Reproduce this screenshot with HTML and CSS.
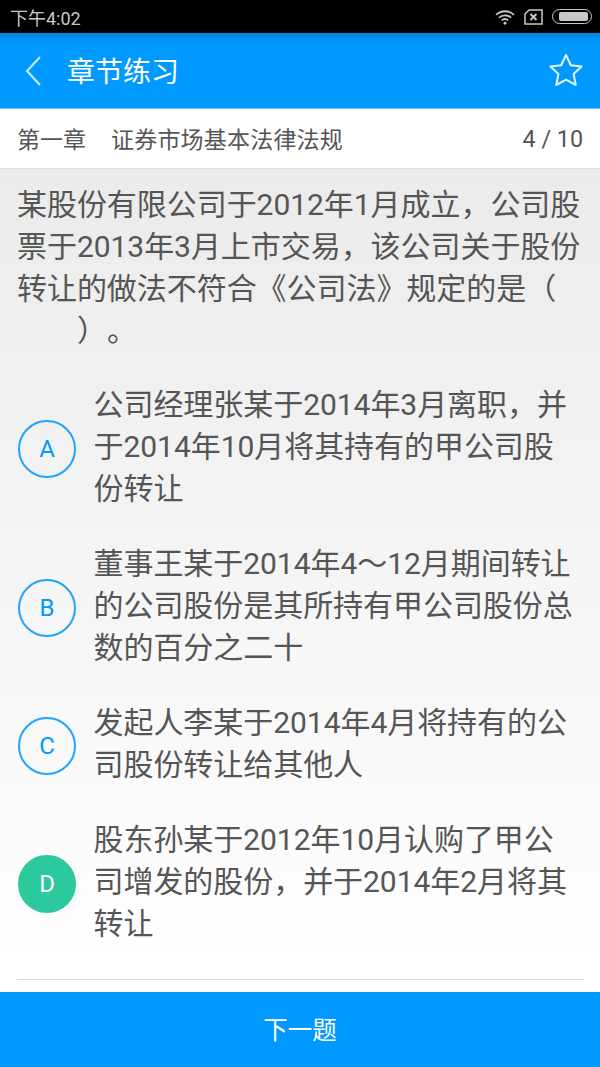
FILE: index.html
```html
<!DOCTYPE html>
<html lang="zh-CN">

<head>
    <meta charset="UTF-8">
    <meta name="viewport" content="width=device-width, initial-scale=1.0">
    <title>章节练习</title>
    <link rel="stylesheet" href="styles.css">
</head>

<body>
    <div class="status-bar">
        <span class="status-time">下午4:02</span>
        <div class="status-icons">
            <svg class="icon-wifi" width="20" height="16" viewBox="0 0 22 18" fill="none" stroke="#c8c8c8" stroke-width="2">
                <path d="M1 6.5C6.5 1.2 15.5 1.2 21 6.5" />
                <path d="M4.2 9.7C8 6.2 14 6.2 17.8 9.7" />
                <path d="M7.4 12.7C9.5 11 12.5 11 14.6 12.7" />
                <circle cx="11" cy="16" r="1.6" fill="#c8c8c8" stroke="none" />
            </svg>
            <svg class="icon-sim" width="19" height="16" viewBox="0 0 19 16" fill="none" stroke="#c8c8c8">
                <path d="M5 1H18V15H1V5Z" stroke-width="1.5" />
                <path d="M6.5 5L12.5 11M12.5 5L6.5 11" stroke-width="2" />
            </svg>
            <div class="battery">
                <div class="battery-level"></div>
            </div>
        </div>
    </div>

    <header class="toolbar">
        <svg class="icon-back" width="16" height="30" viewBox="0 0 16 30" fill="none" stroke="#cdeaff" stroke-width="2">
            <path d="M15 1L2 15L15 29" />
        </svg>
        <h1 class="toolbar-title">章节练习</h1>
        <svg class="icon-star" width="34" height="34" viewBox="0 0 34 34" fill="none" stroke="#e3f4ff" stroke-width="2" stroke-linejoin="round">
            <path d="M17 2L21.8 12.2L32.6 13.6L24.6 21.1L26.8 32L17 26.6L7.2 32L9.4 21.1L1.4 13.6L12.2 12.2Z" />
        </svg>
    </header>

    <div class="chapter-bar">
        <span class="chapter-name">第一章</span>
        <span class="chapter-title">证券市场基本法律法规</span>
        <span class="chapter-count">4 / 10</span>
    </div>

    <main class="question">
        <p class="question-text">某股份有限公司于2012年1月成立，公司股票于2013年3月上市交易，该公司关于股份转让的做法不符合《公司法》规定的是（<br><span class="blank"></span>）。</p>

        <div class="option">
            <div class="option-mark">A</div>
            <div class="option-text">公司经理张某于2014年3月离职，并于2014年10月将其持有的甲公司股份转让</div>
        </div>
        <div class="option">
            <div class="option-mark">B</div>
            <div class="option-text">董事王某于2014年4～12月期间转让的公司股份是其所持有甲公司股份总数的百分之二十</div>
        </div>
        <div class="option">
            <div class="option-mark">C</div>
            <div class="option-text">发起人李某于2014年4月将持有的公司股份转让给其他人</div>
        </div>
        <div class="option">
            <div class="option-mark selected">D</div>
            <div class="option-text">股东孙某于2012年10月认购了甲公司增发的股份，并于2014年2月将其转让</div>
        </div>

        <div class="divider"></div>
    </main>

    <div class="next-button">下一题</div>
</body>

</html>
```

FILE: styles.css
```css
* {
    box-sizing: border-box;
}

body {
    margin: 0;
    width: 600px;
    height: 1067px;
    display: flex;
    flex-direction: column;
    overflow: hidden;
    font-family: Roboto, "Noto Sans CJK SC", sans-serif;
    color: #555555;
    text-spacing-trim: space-all;
}

.status-bar {
    height: 33px;
    padding: 0 8px 0 10px;
    background-color: #000000;
    color: #c8c8c8;
    display: flex;
    align-items: center;
    justify-content: space-between;
    font-size: 18px;
}

.status-icons {
    display: flex;
    align-items: center;
    gap: 9px;
}

.battery {
    width: 40px;
    height: 15px;
    padding: 2px;
    border: 1px solid #c8c8c8;
    border-radius: 8px;
}

.battery-level {
    width: 29px;
    height: 9px;
    margin-left: 4px;
    background-color: #c8c8c8;
    border-radius: 2px;
}

.toolbar {
    height: 76px;
    padding: 0 17px 2px 25px;
    background: linear-gradient(#0088e4, #0099ff 10px);
    border-bottom: 1px solid #6cc4ff;
    display: flex;
    align-items: center;
}

.icon-back {
    margin-top: 2px;
}

.toolbar-title {
    flex: 1;
    margin: 0 0 0 26px;
    font-size: 28px;
    font-weight: normal;
    color: #ffffff;
}

.chapter-bar {
    height: 60px;
    padding: 0 17px 2px;
    background-color: #ffffff;
    border-bottom: 1px solid #dddddd;
    display: flex;
    align-items: center;
    font-size: 23px;
}

.chapter-name {
    margin-right: 25px;
}

.chapter-title {
    flex: 1;
    letter-spacing: 0.2px;
}

.chapter-count {
    font-size: 23.3px;
    padding-top: 2px;
}

.question {
    flex: 1;
    padding: 15px 16px 0 17px;
    background: linear-gradient(#ebebeb, #ffffff 810px);
}

.question-text {
    margin: 0 0 15.5px;
    font-size: 30px;
    line-height: 42px;
    letter-spacing: -0.05px;
}

.blank {
    display: inline-block;
    width: 60px;
}

.option {
    padding: 16.5px 0;
    display: flex;
    align-items: center;
    font-size: 30px;
    line-height: 42px;
    letter-spacing: -0.05px;
}

.option-mark {
    flex: none;
    width: 58px;
    height: 58px;
    margin: 4px 17.5px 0 1px;
    border: 2px solid #1fa5ff;
    border-radius: 50%;
    color: #0099ff;
    display: flex;
    align-items: center;
    justify-content: center;
    font-size: 24px;
}

.option-mark.selected {
    background-color: #2cc99c;
    border-color: #2cc99c;
    color: #ffffff;
}

.option-text {
    flex: 1;
    padding-right: 8px;
}

.divider {
    margin-top: 17.5px;
    border-top: 1px solid #dddddd;
}

.next-button {
    height: 75px;
    padding-bottom: 3px;
    background-color: #0099ff;
    color: #ffffff;
    display: flex;
    align-items: center;
    justify-content: center;
    font-size: 24.5px;
}
```
